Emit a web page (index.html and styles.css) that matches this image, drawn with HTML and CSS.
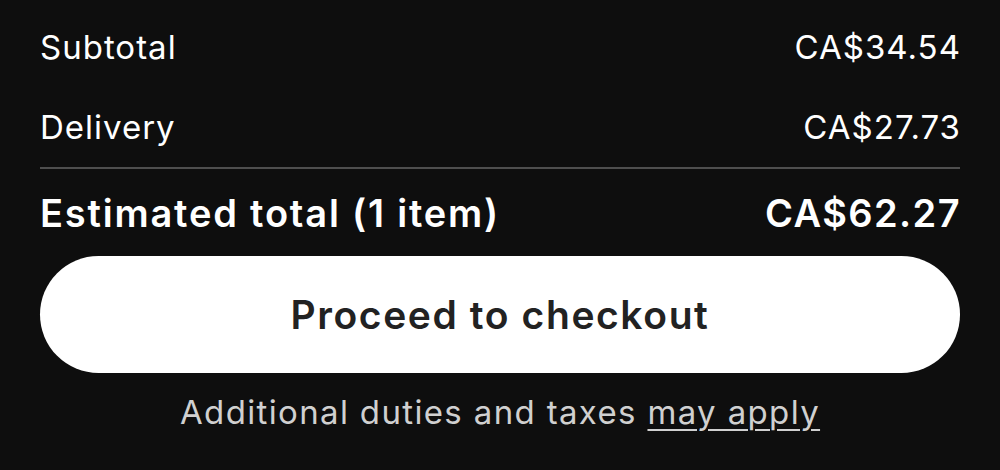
FILE: index.html
```html
<!DOCTYPE html>
<html>
<head>
<meta charset="utf-8">
<link rel="stylesheet" href="styles.css">
</head>
<body>
<div class="summary">
  <div class="row"><span>Subtotal</span><span class="amount">CA$34.54</span></div>
  <div class="row"><span>Delivery</span><span class="amount">CA$27.73</span></div>
  <div class="divider"></div>
  <div class="row total"><span>Estimated total (1 item)</span><span class="amount">CA$62.27</span></div>
  <button class="checkout">Proceed to checkout</button>
  <p class="note">Additional duties and taxes <a class="link">may apply</a></p>
</div>
</body>
</html>
```
FILE: styles.css
```css
html, body {
  margin: 0;
  background: #0e0e0e;
}
body {
  font-family: Inter, "Noto Sans", sans-serif;
  color: #ffffff;
}
.summary {
  padding: 7px 40px 0;
  display: flex;
  flex-direction: column;
}
.row {
  height: 80px;
  display: flex;
  justify-content: space-between;
  align-items: center;
  font-size: 33px;
  letter-spacing: 1px;
}
.amount {
  margin-right: -1px;
}
.divider {
  height: 2px;
  background: #4e4e4e;
}
.row.total {
  height: 87px;
  font-size: 38px;
  font-weight: 600;
  letter-spacing: 1.8px;
}
.row.total .amount {
  letter-spacing: 1.4px;
}
.checkout {
  height: 117px;
  border: none;
  border-radius: 59px;
  background: #ffffff;
  color: #222222;
  font-family: inherit;
  font-size: 39px;
  font-weight: 600;
  letter-spacing: 1.6px;
  padding: 0;
}
.note {
  margin: 0;
  padding-top: 19px;
  text-align: center;
  font-size: 33px;
  color: #d0d0d0;
  letter-spacing: 1.35px;
}
.link {
  text-decoration: underline;
  text-underline-offset: 5px;
  text-decoration-thickness: 2px;
}
```
